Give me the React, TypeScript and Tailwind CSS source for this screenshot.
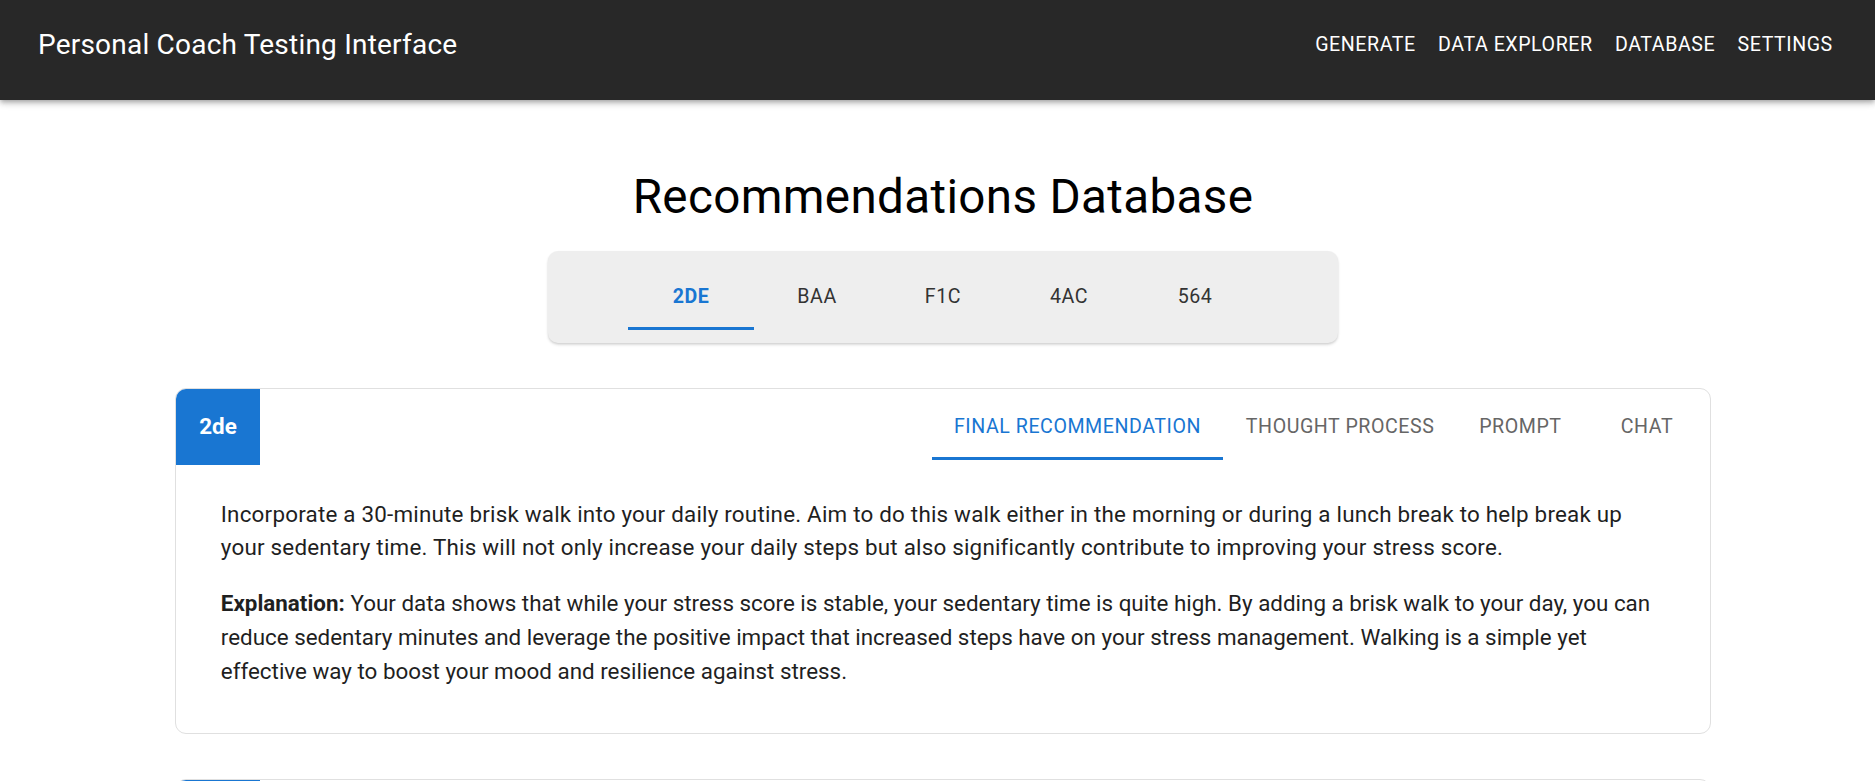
import React from "react";

const navItems = ["GENERATE", "DATA EXPLORER", "DATABASE", "SETTINGS"];
const topTabs = ["2DE", "BAA", "F1C", "4AC", "564"];
const cardTabs = ["FINAL RECOMMENDATION", "THOUGHT PROCESS", "PROMPT", "CHAT"];

type Rec = { id: string; text: string; explanation: string };

const recs: Rec[] = [
  {
    id: "2de",
    text:
      "Incorporate a 30-minute brisk walk into your daily routine. Aim to do this walk either in the morning or during a lunch break to help break up your sedentary time. This will not only increase your daily steps but also significantly contribute to improving your stress score.",
    explanation:
      "Your data shows that while your stress score is stable, your sedentary time is quite high. By adding a brisk walk to your day, you can reduce sedentary minutes and leverage the positive impact that increased steps have on your stress management. Walking is a simple yet effective way to boost your mood and resilience against stress.",
  },
  {
    id: "baa",
    text:
      "Try to keep a consistent bedtime and wake-up time every day, including weekends, to support better sleep quality and recovery.",
    explanation:
      "Your sleep timing varies considerably across the week. A regular schedule helps stabilize your body clock and can improve both sleep duration and daytime energy.",
  },
];

function RecCard({ rec }: { rec: Rec }) {
  return (
    <div className="w-[1536px] border border-[#e0e0e0] rounded-[11px] bg-white overflow-hidden">
      <div className="flex items-center justify-between h-[76px]">
        <div className="h-full w-[84px] bg-[#1976d2] text-white font-bold text-[22.4px] flex items-center justify-center">
          {rec.id}
        </div>
        <div className="flex h-[67px]">
          {cardTabs.map((t, i) => (
            <div
              key={t}
              className={
                i === 0
                  ? "relative min-w-[126px] px-[22.4px] flex items-center justify-center text-[19.6px] font-normal tracking-[0.02857em] text-[#1976d2]"
                  : "relative min-w-[126px] px-[22.4px] flex items-center justify-center text-[19.6px] font-normal tracking-[0.02857em] text-[#666666]"
              }
            >
              {t}
              {i === 0 && <div className="absolute left-0 right-0 bottom-0 h-[3px] bg-[#1976d2]" />}
            </div>
          ))}
        </div>
      </div>
      <div className="px-[44.8px] pt-[33px] pb-[22.4px] text-[22.4px] leading-[1.5] text-[#1f1f1f]">
        <p className="mb-[22.4px] tracking-[0.00938em]">{rec.text}</p>
        <p className="mb-[22.4px]">
          <span className="font-bold">Explanation:</span> {rec.explanation}
        </p>
      </div>
    </div>
  );
}

export default function App() {
  return (
    <div className="min-h-screen bg-white font-['Roboto','Liberation_Sans',sans-serif]">
      <header className="h-[100px] bg-[#282828] text-white shadow-[0px_2px_4px_-1px_rgba(0,0,0,0.2),0px_4px_5px_0px_rgba(0,0,0,0.14),0px_1px_10px_0px_rgba(0,0,0,0.12)] relative z-10">
        <div className="h-[90px] flex items-center justify-between pl-[38px] pr-[31px]">
          <div className="text-[28px] font-normal tracking-[0.0075em]">Personal Coach Testing Interface</div>
          <nav className="flex">
            {navItems.map((n) => (
              <div key={n} className="px-[11.2px] py-[8.4px] text-[19.6px] font-normal tracking-[0.02857em]">
                {n}
              </div>
            ))}
          </nav>
        </div>
      </header>

      <main className="pl-[11px] flex flex-col items-center">
        <h1 className="mt-[68px] text-[47.6px] leading-[1.235] font-normal text-black tracking-[0.00735em]">
          Recommendations Database
        </h1>
        <div className="mt-[24px] w-[790px] bg-[#eeeeee] rounded-[10px] shadow-[0px_2px_3px_rgba(0,0,0,0.12),0px_1px_2px_rgba(0,0,0,0.08)] pt-[12px] pb-[13px] flex justify-center">
          {topTabs.map((t, i) => (
            <div
              key={t}
              className={
                i === 0
                  ? "relative w-[126px] h-[67px] flex items-center justify-center text-[19.6px] font-bold tracking-[0.02857em] text-[#1976d2]"
                  : "relative w-[126px] h-[67px] flex items-center justify-center text-[19.6px] font-normal tracking-[0.02857em] text-[#333333]"
              }
            >
              {t}
              {i === 0 && <div className="absolute left-0 right-0 bottom-0 h-[3px] bg-[#1976d2]" />}
            </div>
          ))}
        </div>

        <div className="mt-[45px] flex flex-col gap-[45px] pb-[40px]">
          {recs.map((r) => (
            <RecCard key={r.id} rec={r} />
          ))}
        </div>
      </main>
    </div>
  );
}
